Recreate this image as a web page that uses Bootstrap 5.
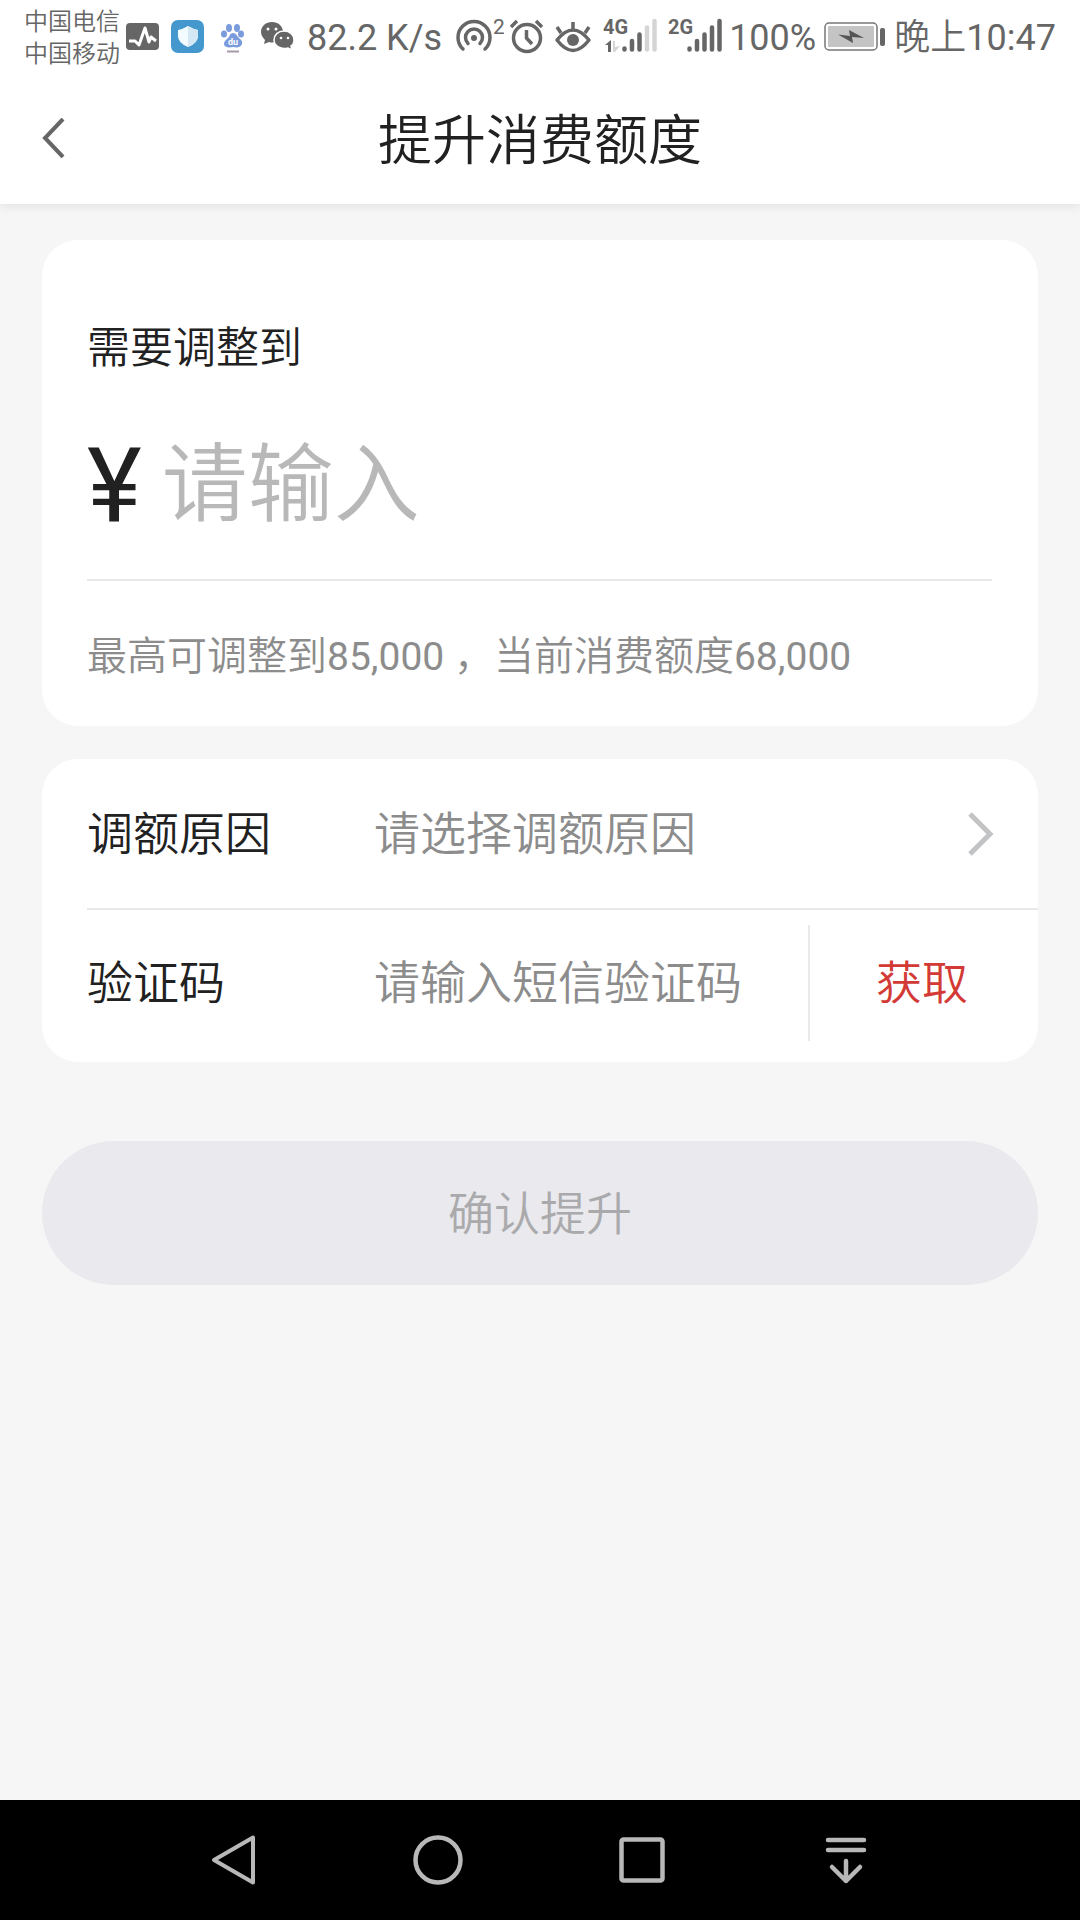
<!DOCTYPE html>
<html lang="zh-CN">
<head>
<meta charset="utf-8">
<meta name="viewport" content="width=device-width, initial-scale=1">
<title>提升消费额度</title>
<link href="https://cdn.jsdelivr.net/npm/bootstrap@5.3.0/dist/css/bootstrap.min.css" rel="stylesheet">
<style>
  body { background: #f6f6f6; color: #212121; font-family: Roboto, "Noto Sans CJK SC", sans-serif; font-weight: 350; }
  svg { display: block; flex: none; }

  .status-bar { height: 72px; padding: 2px 24px 0; gap: 6px; color: #666; font-size: 36px; line-height: 60px; font-weight: 400; background: #fff; z-index: 1; }
  .status-text { padding-top: 6px; }
  .carrier { font-size: 24px; line-height: 32px; font-weight: 350; }
  .clock { font-weight: 350; }
  .clock span { font-weight: 400; }
  .net-type { font-family: "Liberation Sans Narrow", Roboto, sans-serif; font-size: 20px; font-weight: 700; }

  .title-bar { height: 132px; background: #fff; box-shadow: 0 2px 10px rgba(0, 0, 0, .09); }
  .title-bar h1 { font-size: 54px; line-height: 72px; font-weight: 350; padding-top: 8px; }
  .back-link { left: 30px; top: 36px; padding: 10px 12px; }

  .page-body { padding: 36px 42px; }
  .panel { background: #fff; border-radius: 36px; }
  .amount-panel { padding: 78px 46px 39px 45px; margin-bottom: 33px; }
  .amount-label { font-size: 43px; line-height: 60px; }
  .amount-row { height: 120px; margin: 48px 0 33px; gap: 20px; }
  .yen { font-size: 104px; line-height: 120px; font-weight: 400; }
  .hint-line { border-top: 2px solid #e9e9e9; padding-top: 46px; font-size: 40px; line-height: 60px; color: #8c8c8c; }
  .hint-line span { font-size: 39px; font-weight: 400; }

  .plain-field, .plain-field:focus { border: 0; border-radius: 0; background: transparent; box-shadow: none; padding: 0; font-size: 46px; line-height: 60px; font-weight: 350; color: #8c8c8c; }
  .plain-field::placeholder { color: #8c8c8c; opacity: 1; }
  .amount-field, .amount-field:focus { font-size: 86px; line-height: 120px; color: #212121; }
  .amount-field::placeholder { color: #b8b8b8; }

  .form-panel { padding: 1px 0 6px 45px; }
  .field-row { height: 148px; font-size: 46px; line-height: 60px; }
  .field-row + .field-row { border-top: 2px solid #e9e9e9; }
  .field-row label { width: 287px; flex: none; }
  .chevron-box { padding-right: 43px; }
  .fetch-cell { width: 230px; height: 116px; flex: none; border-left: 2px solid #e9e9e9; padding-right: 4px; }
  .fetch-btn, .fetch-btn:hover { color: #d33a35; font-size: 46px; line-height: 60px; font-weight: 350; padding: 0; border: 0; }

  .submit-btn, .submit-btn:disabled { margin-top: 79px; padding: 43px 0 41px; border: 0; background: #e9e9ee; color: #aaaaac; opacity: 1; font-size: 46px; line-height: 60px; font-weight: 350; }

  .system-nav { height: 120px; background: #000; }
  .system-nav button { width: 204px; height: 120px; padding: 0; border: 0; border-radius: 0; }
</style>
<script src="https://cdn.jsdelivr.net/npm/bootstrap@5.3.0/dist/js/bootstrap.bundle.min.js"></script>
</head>
<body class="d-flex flex-column min-vh-100">

<div class="status-bar position-relative d-flex align-items-start text-nowrap">
  <div class="carrier pt-1"><div>中国电信</div><div>中国移动</div></div>
  <svg width="36" height="72" viewBox="126 2 36 72" aria-hidden="true">
    <rect x="126" y="23" width="33" height="27" rx="4" fill="#666"/>
    <path d="M129 41h6l4 4 6-17 4 14 2-5 5 4" fill="none" stroke="#fff" stroke-width="3" stroke-linejoin="round"/>
  </svg>
  <svg width="38" height="72" viewBox="168 2 38 72" aria-hidden="true">
    <rect x="171" y="20" width="33" height="33" rx="7" fill="#4598ce"/>
    <path d="M188 26q5 3 10 4v6q0 7-10 11-10-4-10-11v-6q5-1 10-4z" fill="#f4fbff"/>
    <path d="M188 26q5 3 10 4v6q0 7-10 11z" fill="#d3e8f4"/>
  </svg>
  <svg width="40" height="72" viewBox="212 2 40 72" aria-hidden="true">
    <g fill="#7a9bdc">
      <ellipse cx="229" cy="28" rx="3" ry="4"/><ellipse cx="237" cy="28" rx="3" ry="4"/>
      <ellipse cx="224" cy="34" rx="3" ry="3.5"/><ellipse cx="241" cy="34" rx="3" ry="3.5"/>
      <path d="M233 33c3 0 4 3 6 5s4 3 3 6-4 4-9 3c-5 1-9 0-9-3s2-4 4-6 2-5 5-5z"/>
    </g>
    <text x="233" y="45" font-size="9" font-weight="700" fill="#fff" text-anchor="middle">du</text>
    <path d="M227 51.500h12" stroke="#a59aa5" stroke-width="2"/>
  </svg>
  <svg width="43" height="72" viewBox="258 2 43 72" aria-hidden="true">
    <path d="M272 22c-6 0-11 4-11 10 0 3 2 6 4 8l-1 4 5-2c6 2 14-2 14-10 0-6-5-10-11-10z" fill="#666"/>
    <path d="M284 31c6 0 10 4 10 9 0 3-1 5-3 6l1 4-4-2c-7 2-14-2-14-8 0-5 4-9 10-9z" fill="#666" stroke="#fff" stroke-width="1.500"/>
    <g fill="#fff"><circle cx="268" cy="29" r="1.500"/><circle cx="276" cy="29" r="1.500"/><circle cx="281" cy="38" r="1.300"/><circle cx="288" cy="38" r="1.300"/></g>
  </svg>
  <span class="status-text">82.2 K/s</span>
  <svg width="56" height="72" viewBox="448 2 56 72" aria-hidden="true">
    <g fill="none" stroke="#666" stroke-width="3.500" stroke-linecap="round">
      <path d="M463 49a16 16 0 1 1 22 0"/><path d="M468 43.500a8.500 8.500 0 1 1 12 0"/>
    </g>
    <circle cx="474" cy="38" r="3" fill="#666"/>
    <text x="493" y="34" font-size="21" fill="#666">2</text>
  </svg>
  <svg width="36" height="72" viewBox="511 2 36 72" aria-hidden="true">
    <g fill="none" stroke="#666" stroke-width="3.500">
      <circle cx="528" cy="38" r="13.500"/><path d="M527.500 30v8l5.500 6"/><path d="M512 27l6-6M543 27l-6-6"/>
    </g>
  </svg>
  <svg width="42" height="72" viewBox="553 2 42 72" aria-hidden="true">
    <path d="M558 40q16-20 32 0-16 21-32 0zM574 29v-7M562 33l-4-6M586 33l4-6" fill="none" stroke="#666" stroke-width="3.500" stroke-linejoin="round"/>
    <circle cx="574" cy="40" r="6" fill="#666"/>
  </svg>
  <svg width="59" height="72" viewBox="600 2 59 72" aria-hidden="true">
    <text class="net-type" x="603" y="34" fill="#666">4G</text>
    <path d="M605 45l6-5v12h-3v-7z" fill="#666"/><path d="M613 41h2v6l5-1-5 6h-2z" fill="#d5d5d5"/>
    <g stroke-width="4.500" stroke-linecap="round">
      <path d="M624.500 48.500v1M632 41v8.500M639.500 34.500v15" stroke="#666"/>
      <path d="M647 27.500v22M654.500 21v28.500" stroke="#d5d5d5"/>
    </g>
  </svg>
  <svg width="58" height="72" viewBox="665 2 58 72" aria-hidden="true">
    <text class="net-type" x="668" y="34" fill="#666">2G</text>
    <path d="M689.500 48.500v1M697 41v8.500M704.500 34.500v15M712 27.500v22M719.500 21v28.500" stroke="#666" stroke-width="4.500" stroke-linecap="round"/>
  </svg>
  <span class="status-text">100%</span>
  <svg width="66" height="72" viewBox="822 2 66 72" aria-hidden="true">
    <rect x="825" y="23" width="52" height="27" rx="4" fill="#fff" stroke="#777" stroke-width="1.500"/>
    <rect x="828" y="26" width="46" height="21" rx="1" fill="#c4c4c4"/>
    <path d="M838 34.500l12 1.500-1-6 15 8-12-1 1 6z" fill="#555"/>
    <rect x="880" y="28" width="5" height="18" rx="2" fill="#666"/>
  </svg>
  <div class="clock status-text">晚上<span>10:47</span></div>
</div>

<header class="title-bar position-relative d-flex align-items-center justify-content-center">
  <a class="back-link position-absolute" href="#" aria-label="返回">
    <svg width="24" height="40" viewBox="0 0 24 40"><path d="M21 1L3 20l18 19" fill="none" stroke="#666" stroke-width="4"/></svg>
  </a>
  <h1 class="m-0">提升消费额度</h1>
</header>

<main class="page-body flex-grow-1">
  <form>
    <section class="panel amount-panel">
      <label class="amount-label d-block" for="amount">需要调整到</label>
      <div class="amount-row d-flex align-items-center">
        <span class="yen">¥</span>
        <input class="form-control plain-field amount-field" id="amount" type="text" inputmode="numeric" placeholder="请输入">
      </div>
      <div class="hint-line">最高可调整到<span>85,000 </span>，当前消费额度<span>68,000</span></div>
    </section>

    <section class="panel form-panel">
      <div class="field-row d-flex align-items-center">
        <label for="reason">调额原因</label>
        <select class="form-select plain-field" id="reason">
          <option selected>请选择调额原因</option>
        </select>
        <div class="chevron-box">
          <svg width="28" height="44" viewBox="0 0 28 44" aria-hidden="true"><path d="M3 2l20 20L3 42" fill="none" stroke="#c2c3c5" stroke-width="5"/></svg>
        </div>
      </div>
      <div class="field-row d-flex align-items-center">
        <label for="code">验证码</label>
        <input class="form-control plain-field" id="code" type="text" placeholder="请输入短信验证码">
        <div class="fetch-cell d-flex align-items-center justify-content-center">
          <button class="btn fetch-btn" type="button">获取</button>
        </div>
      </div>
    </section>

    <button class="btn submit-btn rounded-pill w-100 d-block" type="submit" disabled>确认提升</button>
  </form>
</main>

<nav class="system-nav d-flex justify-content-center" aria-label="系统导航">
  <button class="btn d-flex align-items-center justify-content-center" type="button" aria-label="后退">
    <svg width="52" height="52" viewBox="0 0 52 52"><path d="M45 3.500v45L6 26z" fill="none" stroke="#b8b8b8" stroke-width="4" stroke-linejoin="round"/></svg>
  </button>
  <button class="btn d-flex align-items-center justify-content-center" type="button" aria-label="主屏幕">
    <svg width="52" height="52" viewBox="0 0 52 52"><circle cx="26" cy="26" r="22.500" fill="none" stroke="#b8b8b8" stroke-width="4.500"/></svg>
  </button>
  <button class="btn d-flex align-items-center justify-content-center" type="button" aria-label="最近任务">
    <svg width="52" height="52" viewBox="0 0 52 52"><rect x="5.500" y="5.500" width="41" height="41" rx="2" fill="none" stroke="#b8b8b8" stroke-width="4.500"/></svg>
  </button>
  <button class="btn d-flex align-items-center justify-content-center" type="button" aria-label="下拉通知">
    <svg width="52" height="52" viewBox="0 0 52 52"><path d="M8 6h36M8 16h36M26 27v20M12 33l14 14 14-14" fill="none" stroke="#b8b8b8" stroke-width="4.500" stroke-linecap="round" stroke-linejoin="round"/></svg>
  </button>
</nav>
</body>
</html>
